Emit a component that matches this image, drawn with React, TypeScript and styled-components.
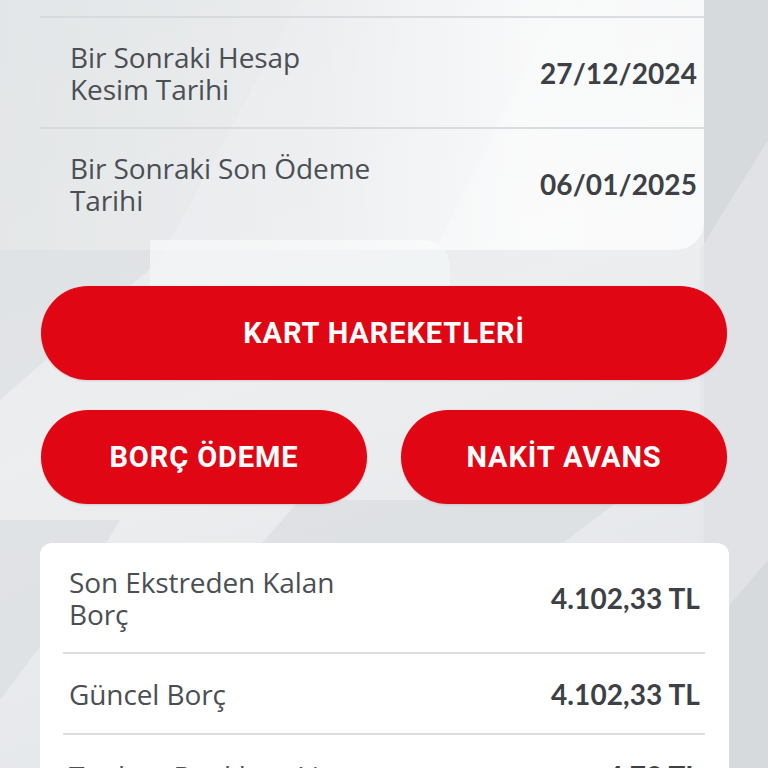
import React from "react";
import styled, { createGlobalStyle } from "styled-components";

const Global = createGlobalStyle`
  html, body { margin: 0; padding: 0; }
  body { width: 768px; height: 768px; overflow: hidden; background: #e3e6e9; }
  #root { width: 768px; height: 768px; }
`;

const Page = styled.div`
  position: relative;
  width: 768px;
  height: 768px;
  overflow: hidden;
  font-family: "Open Sans", Lato, sans-serif;
  background: linear-gradient(160deg, #e4e7ea 0%, #eceef0 45%, #e1e4e7 100%);
`;

const Backdrop = styled.svg`
  position: absolute;
  inset: 0;
  width: 768px;
  height: 768px;
  pointer-events: none;
`;

const Content = styled.div`
  position: relative;
  display: flex;
  flex-direction: column;
`;

const TopPanel = styled.section`
  width: 704px;
  padding: 16px 0 12px 0;
  background: linear-gradient(90deg, rgba(255, 255, 255, 0.15) 0%, rgba(255, 255, 255, 0.35) 45%, rgba(255, 255, 255, 0.75) 75%, rgba(255, 255, 255, 0.7) 100%);
  border-bottom-right-radius: 28px;
  display: flex;
  flex-direction: column;
`;

const InfoRow = styled.div<{ $h: number }>`
  height: ${(p) => p.$h}px;
  box-sizing: border-box;
  margin-left: 40px;
  padding: 0 7px 0 30px;
  border-top: 2px solid rgba(214, 217, 220, 0.9);
  display: flex;
  align-items: center;
  justify-content: space-between;
`;

const Label = styled.div`
  display: flex;
  flex-direction: column;
  font-size: 28px;
  line-height: 32px;
  color: #4b4f54;
  font-weight: 400;
  letter-spacing: -0.1px;
`;

const Line = styled.span`
  display: block;
  white-space: nowrap;
`;

const Value = styled.div`
  font-family: Lato, "Open Sans", sans-serif;
  font-size: 28px;
  font-weight: 700;
  color: #3d4146;
  letter-spacing: 0.1px;
`;

const Actions = styled.div`
  margin: 36px 41px 0 41px;
  display: grid;
  grid-template-columns: 1fr 1fr;
  column-gap: 34px;
  row-gap: 30px;
`;

const PillButton = styled.button<{ $wide?: boolean }>`
  grid-column: ${(p) => (p.$wide ? "1 / span 2" : "auto")};
  height: 94px;
  border: none;
  border-radius: 47px;
  background: #e10613;
  color: #ffffff;
  font-family: Roboto, "Liberation Sans", sans-serif;
  font-weight: 700;
  font-size: 29px;
  letter-spacing: 0.9px;
  box-shadow: 0 1px 2px rgba(120, 0, 0, 0.15);
  cursor: pointer;
`;

const Card = styled.section`
  margin: 39px 39px 0 40px;
  background: #ffffff;
  border-radius: 12px;
  padding: 0 24px 0 23px;
  display: flex;
  flex-direction: column;
`;

const CardRow = styled.div<{ $h: number; $last?: boolean }>`
  height: ${(p) => p.$h}px;
  box-sizing: border-box;
  padding: 0 5px 0 6px;
  border-bottom: ${(p) => (p.$last ? "none" : "2px solid #dcdddf")};
  display: flex;
  align-items: center;
  justify-content: space-between;
`;

const rows = [
  { label: ["Bir Sonraki Hesap", "Kesim Tarihi"], value: "27/12/2024" },
  { label: ["Bir Sonraki Son Ödeme", "Tarihi"], value: "06/01/2025" },
];

const cardRows = [
  { label: ["Son Ekstreden Kalan", "Borç"], value: "4.102,33 TL", h: 111 },
  { label: ["Güncel Borç"], value: "4.102,33 TL", h: 81 },
  { label: ["Toplam Bankkart Lira"], value: "4,73 TL", h: 81 },
];

export default function App() {
  return (
    <>
      <Global />
      <Page>
        <Backdrop viewBox="0 0 768 768">
          <polygon points="0,0 300,0 160,260 0,400" fill="#d9dcdf" opacity="0.55" />
          <polygon points="250,0 560,0 430,260 120,260" fill="#dfe2e5" opacity="0.5" />
          <path d="M150,240 H420 Q450,240 450,270 V300 H150 Z" fill="#f2f4f5" opacity="0.9" />
          <polygon points="704,0 768,0 768,768 704,768" fill="#d7dadd" />
          <polygon points="768,140 768,560 700,640 700,250" fill="#e4e6e9" opacity="0.7" />
          <polygon points="0,520 120,520 60,620 0,700" fill="#d9dcdf" opacity="0.6" />
          <polygon points="300,500 620,500 560,545 260,545" fill="#dadde0" opacity="0.7" />
        </Backdrop>
        <Content>
          <TopPanel>
            {rows.map((r) => (
              <InfoRow key={r.value} $h={111}>
                <Label>
                  {r.label.map((l) => (
                    <Line key={l}>{l}</Line>
                  ))}
                </Label>
                <Value>{r.value}</Value>
              </InfoRow>
            ))}
          </TopPanel>
          <Actions>
            <PillButton $wide>KART HAREKETLERİ</PillButton>
            <PillButton>BORÇ ÖDEME</PillButton>
            <PillButton>NAKİT AVANS</PillButton>
          </Actions>
          <Card>
            {cardRows.map((r, i) => (
              <CardRow key={r.value + i} $h={r.h} $last={i === cardRows.length - 1}>
                <Label>
                  {r.label.map((l) => (
                    <Line key={l}>{l}</Line>
                  ))}
                </Label>
                <Value>{r.value}</Value>
              </CardRow>
            ))}
          </Card>
        </Content>
      </Page>
    </>
  );
}
